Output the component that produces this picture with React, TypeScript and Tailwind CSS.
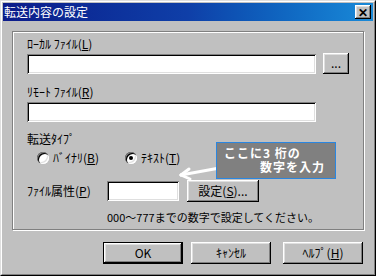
import React from "react";

const font = { fontFamily: '"Noto Sans CJK JP", "Liberation Sans", sans-serif' };

function Raised({ className = "", children }: { className?: string; children?: React.ReactNode }) {
  return (
    <div
      className={`flex items-center justify-center whitespace-nowrap bg-[#c0c0c0] text-[12px] leading-none text-black shadow-[inset_-1px_-1px_0_#000,inset_1px_1px_0_#fff,inset_-2px_-2px_0_#808080,inset_2px_2px_0_#dfdfdf] ${className}`}
    >
      {children}
    </div>
  );
}

function Field({ className = "" }: { className?: string }) {
  return (
    <div
      className={`bg-white shadow-[inset_1px_1px_0_#808080,inset_-1px_-1px_0_#fff,inset_2px_2px_0_#000,inset_-2px_-2px_0_#dfdfdf] ${className}`}
    />
  );
}

function Radio({ checked, label, mark }: { checked?: boolean; label: string; mark: string }) {
  return (
    <div className="flex items-center gap-[4px] whitespace-nowrap">
      <div className="relative h-[12px] w-[12px] shrink-0 rounded-full bg-white shadow-[inset_1px_1px_0_#808080,inset_2px_2px_0_#000,inset_-1px_-1px_0_#fff,inset_-2px_-2px_0_#dfdfdf]">
        {checked && <div className="absolute left-[4px] top-[4px] h-[4px] w-[4px] rounded-full bg-black" />}
      </div>
      <span>
        {label}(<u>{mark}</u>)
      </span>
    </div>
  );
}

export default function App() {
  return (
    <div className="h-[276px] w-[376px] overflow-hidden border border-b-black border-l-[#dfdfdf] border-r-black border-t-[#dfdfdf] bg-[#c0c0c0]" style={font}>
      <div className="relative h-full w-full whitespace-nowrap border border-b-[#808080] border-l-white border-r-[#808080] border-t-white p-[1px] text-[12px] leading-4 text-black">
        {/* title bar */}
        <div className="flex h-[18px] items-center justify-between bg-gradient-to-r from-[#0c1b8a] via-[#0f3fa8] to-[#1a8ad8] pl-[1px] pr-[2px]">
          <span className="text-[12px] leading-none text-white">転送内容の設定</span>
          <Raised className="h-[14px] w-[16px] text-[11px] font-bold">✕</Raised>
        </div>

        {/* group */}
        <div className="ml-[9px] mt-[10px] h-[199px] w-[352px] border border-[#808080] pl-[14px] pt-[4px] shadow-[inset_1px_1px_0_#fff,1px_1px_0_#fff]">
          <div className="h-4">
            ﾛｰｶﾙ ﾌｧｲﾙ(<u>L</u>)
          </div>
          <div className="mt-[2px] flex items-start">
            <Field className="h-[20px] w-[289px]" />
            <Raised className="-mt-[1px] ml-[7px] h-[21px] w-[26px] pb-[2px]">...</Raised>
          </div>

          <div className="mt-[10px] h-4">
            ﾘﾓｰﾄ ﾌｧｲﾙ(<u>R</u>)
          </div>
          <Field className="mt-[2px] h-[20px] w-[289px]" />

          <div className="mt-[9px] h-4">転送ﾀｲﾌﾟ</div>
          <div className="mt-[3px] flex h-4 items-center pl-[10px]">
            <div className="w-[88px]">
              <Radio label="ﾊﾞｲﾅﾘ" mark="B" />
            </div>
            <Radio checked label="ﾃｷｽﾄ" mark="T" />
          </div>

          <div className="mt-[14px] flex h-[22px] items-center">
            <span className="w-[80px]">
              ﾌｧｲﾙ属性(<u>P</u>)
            </span>
            <Field className="h-[20px] w-[72px]" />
            <Raised className="ml-[8px] h-[22px] w-[72px]">
              設定(<u>S</u>)...
            </Raised>
          </div>

          <div className="ml-[80px] mt-[7px] h-4 text-[11px]">000〜777までの数字で設定してください。</div>
        </div>

        {/* buttons */}
        <div className="mt-[12px] flex pl-[100px]">
          <div className="h-[22px] w-[80px] border border-black">
            <Raised className="h-full w-full">OK</Raised>
          </div>
          <Raised className="ml-[8px] h-[22px] w-[80px]">ｷｬﾝｾﾙ</Raised>
          <Raised className="ml-[12px] h-[22px] w-[80px]">
            ﾍﾙﾌﾟ(<u>H</u>)
          </Raised>
        </div>

        {/* callout */}
        <svg className="absolute left-[170px] top-[158px]" width="60" height="24" viewBox="0 0 60 24">
          <g stroke="#fff" strokeWidth="3" strokeLinecap="round" fill="none">
            <path d="M53 7 L9 15" />
            <path d="M9 15 L17 9" />
            <path d="M9 15 L18 19" />
          </g>
        </svg>
        <div className="absolute left-[214px] top-[140px] h-[37px] w-[120px] border-[1.5px] border-[#2a86e0] bg-[#808080] pl-[7px] pt-[3px] text-[12px] font-bold leading-[14px] tracking-[1px] text-white">
          <div className="h-[14px] whitespace-pre">ここに3 桁の</div>
          <div className="h-[14px] pl-[36px]">数字を入力</div>
        </div>
      </div>
    </div>
  );
}
